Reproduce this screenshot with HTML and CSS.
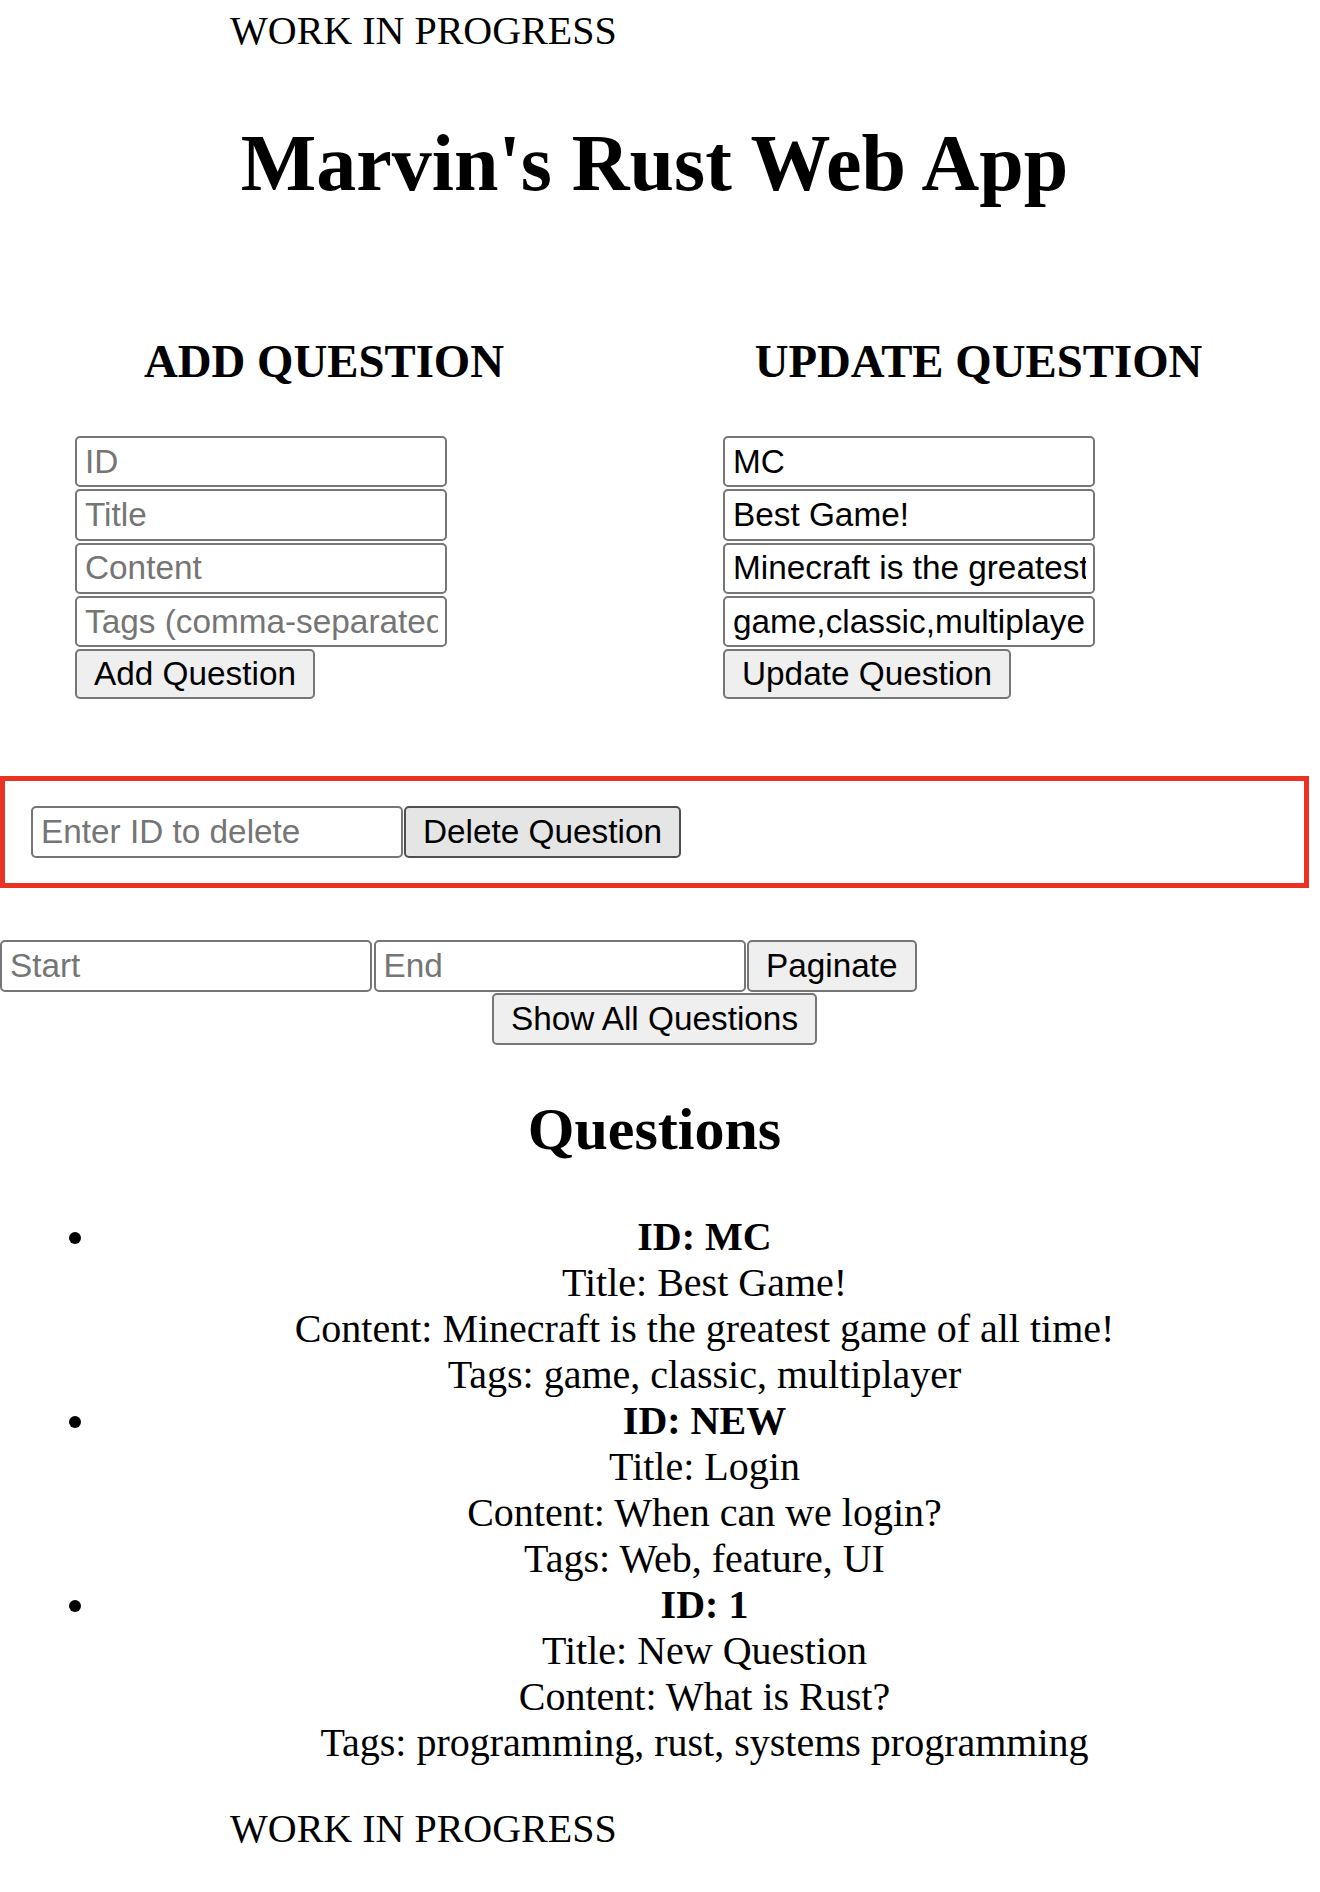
FILE: index.html
```html
<!DOCTYPE html>
<html lang="en">
<head>
<meta charset="utf-8">
<title>Marvin's Rust Web App</title>
<link rel="stylesheet" href="styles.css">
</head>
<body>
<div class="page">
  <div class="wip wip-top">WORK IN PROGRESS</div>
  <h1 class="title">Marvin's Rust Web App</h1>

  <div class="columns">
    <section class="col">
      <h3 class="col-heading">ADD QUESTION</h3>
      <form class="qform">
        <input class="field" type="text" placeholder="ID">
        <input class="field" type="text" placeholder="Title">
        <input class="field" type="text" placeholder="Content">
        <input class="field" type="text" placeholder="Tags (comma-separated)">
        <button class="btn" type="button">Add Question</button>
      </form>
    </section>
    <section class="col">
      <h3 class="col-heading">UPDATE QUESTION</h3>
      <form class="qform">
        <input class="field" type="text" value="MC">
        <input class="field" type="text" value="Best Game!">
        <input class="field" type="text" value="Minecraft is the greatest game of all time!">
        <input class="field" type="text" value="game,classic,multiplayer">
        <button class="btn" type="button">Update Question</button>
      </form>
    </section>
  </div>

  <div class="delete-box">
    <input class="field field-inline" type="text" placeholder="Enter ID to delete">
    <button class="btn btn-hover" type="button">Delete Question</button>
  </div>

  <div class="paginate">
    <input class="field field-inline" type="text" placeholder="Start">
    <input class="field field-inline" type="text" placeholder="End">
    <button class="btn" type="button">Paginate</button>
  </div>
  <button class="btn btn-center" type="button">Show All Questions</button>

  <h2 class="list-heading">Questions</h2>
  <ul class="questions">
    <li>
      <strong>ID: MC</strong><br>
      Title: Best Game!<br>
      Content: Minecraft is the greatest game of all time!<br>
      Tags: game, classic, multiplayer
    </li>
    <li>
      <strong>ID: NEW</strong><br>
      Title: Login<br>
      Content: When can we login?<br>
      Tags: Web, feature, UI
    </li>
    <li>
      <strong>ID: 1</strong><br>
      Title: New Question<br>
      Content: What is Rust?<br>
      Tags: programming, rust, systems programming
    </li>
  </ul>
  <div class="wip">WORK IN PROGRESS</div>
</div>
</body>
</html>
```

FILE: styles.css
```css
html, body {
  margin: 0;
  padding: 0;
  background: #ffffff;
}

body {
  font-family: "Liberation Serif", "Times New Roman", serif;
  font-size: 40px;
  line-height: 46px;
  color: #000000;
}

.page {
  width: 1309px;
}

.wip {
  padding-left: 230px;
  line-height: 46px;
}

.wip-top {
  margin-top: 7.5px;
}

.title {
  margin: 63.5px 0 0;
  font-size: 80px;
  line-height: 92px;
  font-weight: bold;
  text-align: center;
}

.columns {
  display: grid;
  grid-template-columns: 648px 1fr;
  margin-top: 125px;
}

.col-heading {
  margin: 0 0 48px;
  font-size: 46.8px;
  line-height: 54px;
  font-weight: bold;
  text-align: center;
}

.qform {
  display: flex;
  flex-direction: column;
  align-items: flex-start;
  padding-left: 75px;
}

.field {
  box-sizing: border-box;
  width: 372px;
  height: 51.3px;
  margin: 0 0 2px;
  padding: 0 7px 0 8px;
  border: 2px solid #767676;
  border-radius: 5px;
  background: #ffffff;
  color: #000000;
  font-family: "Liberation Sans", Arial, sans-serif;
  font-size: 33.33px;
  outline: none;
}

.field::placeholder {
  color: #757575;
  opacity: 1;
}

.btn {
  box-sizing: border-box;
  height: 50.3px;
  margin: 0;
  padding: 0 17px;
  border: 2px solid #767676;
  border-radius: 5px;
  background: #efefef;
  color: #000000;
  font-family: "Liberation Sans", Arial, sans-serif;
  font-size: 33.33px;
  white-space: nowrap;
}

.btn-hover {
  background: #e5e5e5;
  border-color: #4f4f4f;
}

.delete-box {
  display: flex;
  align-items: center;
  gap: 1px;
  margin-top: 77px;
  height: 52px;
  padding: 25px 26px;
  border: 5px solid #ea3323;
}

.delete-box .field,
.delete-box .btn {
  height: 52px;
  margin: 0;
}

.paginate {
  display: flex;
  gap: 1.5px;
  margin-top: 52px;
}

.paginate .field,
.paginate .btn {
  height: 52px;
  margin: 0;
}

.btn-center {
  display: block;
  height: 52px;
  margin: 1px auto 0;
}

.list-heading {
  margin: 50px 0 49.5px;
  font-size: 60px;
  line-height: 69px;
  font-weight: bold;
  text-align: center;
}

.questions {
  margin: 0 0 40px;
  padding-left: 100px;
  list-style: disc outside;
}

.questions li {
  text-align: center;
  line-height: 46px;
}
```
